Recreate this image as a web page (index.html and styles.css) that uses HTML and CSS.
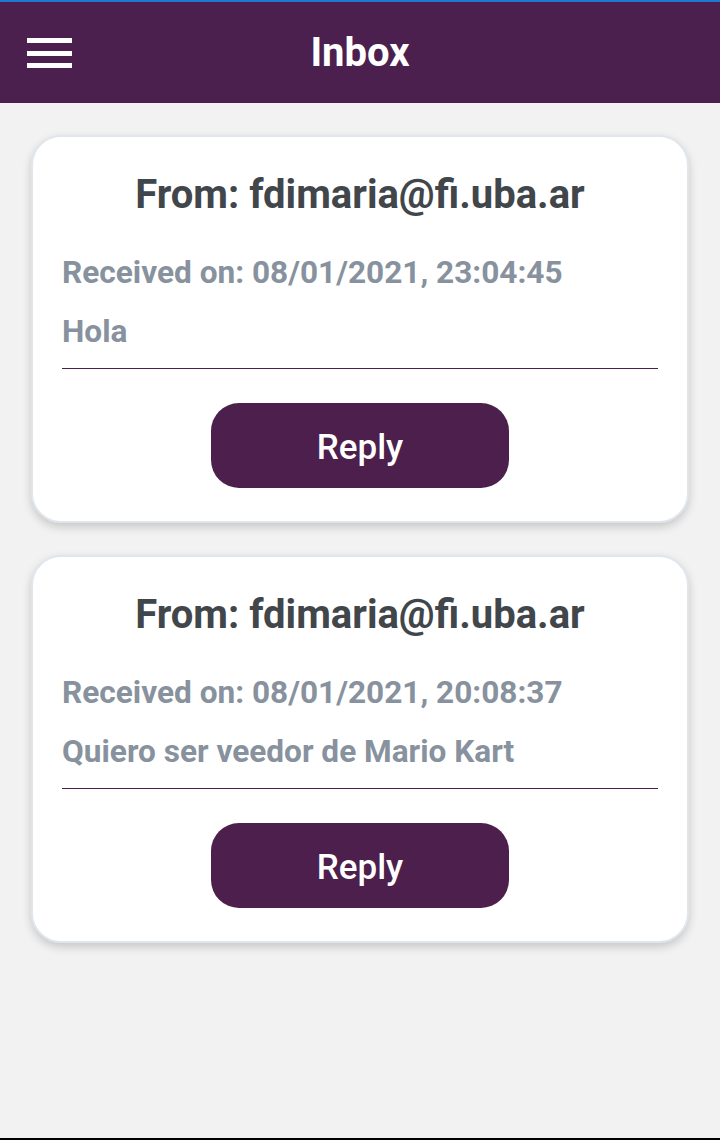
FILE: index.html
```html
<!DOCTYPE html>
<html lang="en">
<head>
<meta charset="utf-8">
<title>Inbox</title>
<link rel="stylesheet" href="styles.css">
</head>
<body>
<div class="topline"></div>
<header class="appbar">
  <button class="menu" aria-label="Menu">
    <span class="bar"></span><span class="bar"></span><span class="bar"></span>
  </button>
  <h1 class="title">Inbox</h1>
</header>
<main class="list">
  <section class="card">
    <h2 class="from">From: fdimaria@fi.uba.ar</h2>
    <p class="meta">Received on: 08/01/2021, 23:04:45</p>
    <p class="body">Hola</p>
    <hr class="rule">
    <div class="actions"><button class="reply">Reply</button></div>
  </section>
  <section class="card">
    <h2 class="from">From: fdimaria@fi.uba.ar</h2>
    <p class="meta">Received on: 08/01/2021, 20:08:37</p>
    <p class="body">Quiero ser veedor de Mario Kart</p>
    <hr class="rule">
    <div class="actions"><button class="reply">Reply</button></div>
  </section>
</main>
<div class="bottomline"></div>
</body>
</html>
```
FILE: styles.css
```css
* { box-sizing: border-box; }
html, body { margin: 0; padding: 0; }
body {
  width: 720px;
  height: 1140px;
  background: #f2f2f2;
  font-family: Roboto, "Liberation Sans", sans-serif;
  display: flex;
  flex-direction: column;
}
.topline { height: 2px; background: #1e78d2; }
.appbar {
  height: 101px;
  background: #4b1f4e;
  display: flex;
  align-items: center;
  justify-content: center;
  position: relative;
}
.menu {
  position: absolute;
  left: 27px;
  top: 35px;
  width: 45px;
  height: 30px;
  padding: 0;
  border: 0;
  background: transparent;
  display: flex;
  flex-direction: column;
  justify-content: space-between;
}
.bar { display: block; width: 45px; height: 5px; background: #fff; }
.title {
  margin: 0;
  color: #fff;
  font-size: 40px;
  font-weight: 700;
  line-height: 44px;
}
.list {
  flex: 1;
  padding: 32px 31px 0;
  display: flex;
  flex-direction: column;
  gap: 32px;
}
.card {
  background: #fff;
  border: 2px solid #e0e6ec;
  border-radius: 30px;
  box-shadow: 0 4px 10px rgba(0,0,0,0.18);
  padding: 38px 29px 33px;
}
.from {
  margin: 0;
  text-align: center;
  color: #41464b;
  font-size: 40px;
  font-weight: 700;
  line-height: 40px;
}
.meta, .body {
  margin: 0;
  color: #87929e;
  font-size: 31.6px;
  font-weight: 700;
  line-height: 34px;
}
.meta { margin-top: 41px; }
.body { margin-top: 25px; }
.rule {
  margin: 19px 0 0;
  border: 0;
  height: 1px;
  background: #4b1f4e;
}
.actions { display: flex; justify-content: center; margin-top: 34px; }
.reply {
  width: 298px;
  height: 85px;
  border: 0;
  border-radius: 28px;
  background: #4c1f4d;
  color: #fff;
  font-family: Roboto, "Liberation Sans", sans-serif;
  font-size: 35px;
  font-weight: 500;
  padding: 3px 0 0;
}
.bottomline { height: 2px; background: #000; }
.appbar .menu { top: 36px; }
```
